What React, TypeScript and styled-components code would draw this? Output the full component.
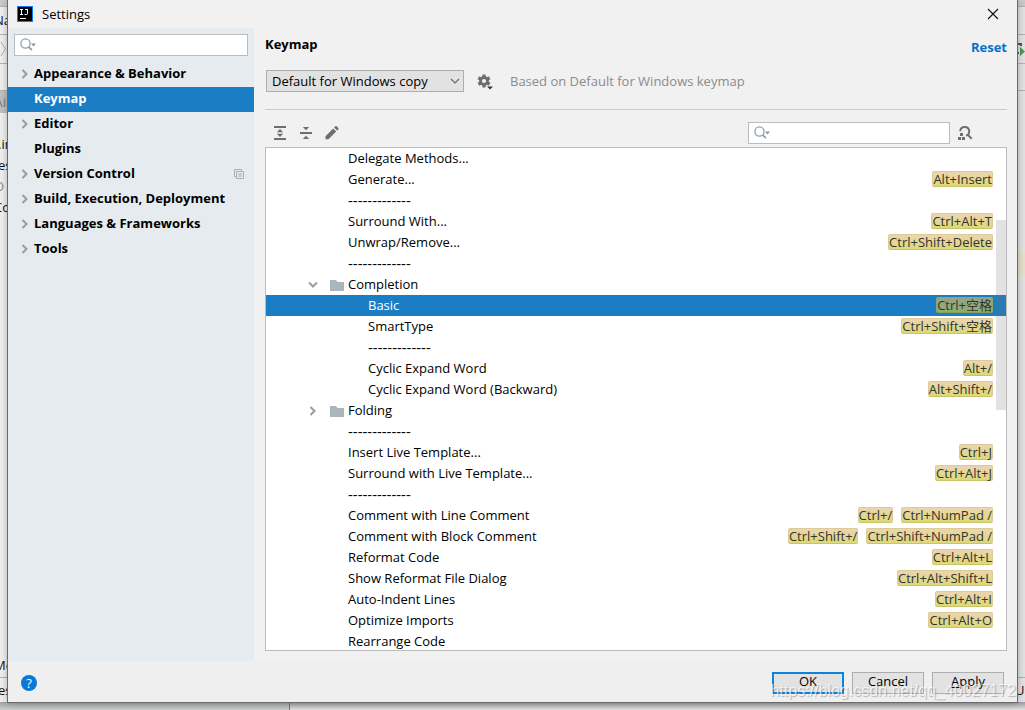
import React from "react";
import styled, { createGlobalStyle } from "styled-components";

const Global = createGlobalStyle`
  *, *::before, *::after { box-sizing: border-box; }
  body { margin: 0; background: #e4e4e4; color: #000; font: 13px/21px "Open Sans", "Noto Sans CJK SC", sans-serif; }
  button, input, select { font: inherit; color: inherit; }
`;

const Desktop = styled.div`
  position: relative;
  display: grid;
  grid-template-columns: 8px minmax(0, 1fr) 8px;
  grid-template-rows: minmax(0, 1fr) 8px;
  height: 100vh;
  min-height: 480px;
  overflow: hidden;
`;

const LeftEdge = styled.div`
  grid-row: 1;
  grid-column: 1;
  display: flex;
  flex-direction: column;
  overflow: hidden;
  background: #f0f0f0;
  white-space: nowrap;
`;
const RightEdge = styled(LeftEdge)`
  grid-column: 3;
  background: #e3e3e3;
`;
const EdgeCell = styled.div<{ $h: number; $bg?: string; $line?: boolean; $fg?: string; $cut?: boolean }>`
  flex: 0 0 ${(p) => p.$h}px;
  display: flex;
  align-items: center;
  text-indent: ${(p) => (p.$cut ? "-6px" : "-2px")};
  background: ${(p) => p.$bg || "transparent"};
  border-bottom: ${(p) => (p.$line ? "1px solid #b4b4b4" : "0")};
  color: ${(p) => p.$fg || "#111"};
`;
const EdgeFill = styled.div`
  flex: 1;
`;
const BottomEdge = styled.div`
  grid-column: 1 / -1;
  grid-row: 2;
  display: flex;
  background: linear-gradient(#9a9a9a, #e2e2e2);
`;
const BottomLeft = styled.div`
  flex: 0 0 290px;
  background: linear-gradient(#a0a2a1, #cdcfce);
  border-right: 1px solid #777;
`;

const Dialog = styled.section`
  grid-column: 2;
  grid-row: 1;
  z-index: 1;
  display: grid;
  grid-template-columns: 246px minmax(0, 1fr);
  grid-template-rows: 28px minmax(0, 1fr) 41px;
  background: #f1f1f1;
  box-shadow: 0 0 0 1px #6a6a6a, 0 0 8px rgba(0, 0, 0, 0.35);
`;
const TitleBar = styled.header`
  grid-column: 1 / -1;
  display: flex;
  align-items: center;
  gap: 9px;
  padding: 0 18px 0 9px;
`;
const Title = styled.span`
  flex: 1;
`;
const IconButton = styled.button`
  display: flex;
  align-items: center;
  justify-content: center;
  padding: 0;
  border: 0;
  background: none;
`;

const Sidebar = styled.aside`
  background: #e5ebef;
  padding-top: 6px;
`;
const SearchBox = styled.label<{ $w?: number }>`
  display: flex;
  align-items: center;
  width: ${(p) => (p.$w ? p.$w + "px" : "auto")};
  height: 22px;
  padding-left: 5px;
  background: #fff;
  border: 1px solid #bcbcbc;
`;
const SideSearch = styled.div`
  padding: 0 6px;
`;
const SearchInput = styled.input`
  flex: 1;
  min-width: 0;
  border: 0;
  outline: 0;
  padding: 0 4px;
  background: transparent;
`;
const NavList = styled.ul`
  list-style: none;
  margin: 6px 0 0;
  padding: 0;
`;
const NavItem = styled.li<{ $active?: boolean }>`
  display: flex;
  align-items: center;
  height: 25px;
  padding: 0 10px 2px 12px;
  font-weight: 700;
  background: ${(p) => (p.$active ? "#1b7dc4" : "transparent")};
  color: ${(p) => (p.$active ? "#fff" : "#000")};
`;
const NavArrow = styled.span`
  display: flex;
  width: 14px;
`;
const NavLink = styled.a`
  flex: 1;
  color: inherit;
  text-decoration: none;
`;

const Main = styled.main`
  display: flex;
  flex-direction: column;
  min-height: 0;
  padding: 5px 10px 10px 11px;
`;
const HeadingRow = styled.div`
  display: flex;
  justify-content: space-between;
  align-items: center;
  height: 22px;
`;
const Heading = styled.h1`
  margin: 0;
  font-size: 13px;
`;
const ResetLink = styled.a`
  padding-top: 6px;
  font-weight: 700;
  color: #0870c8;
  text-decoration: none;
`;
const SchemeRow = styled.div`
  display: flex;
  align-items: center;
  height: 55px;
  padding: 0 0 3px 1px;
  border-bottom: 1px solid #cbcbcb;
`;
const SelectWrap = styled.span`
  display: grid;
  align-items: center;
  width: 198px;
  svg { grid-area: 1 / 1; justify-self: end; margin-right: 4px; pointer-events: none; }
`;
const SchemeSelect = styled.select`
  grid-area: 1 / 1;
  appearance: none;
  height: 22px;
  padding: 0 5px 2px;
  border: 1px solid #adadad;
  border-radius: 0;
  background: #e2e2e2;
`;
const Hint = styled.span`
  margin-left: 16px;
  padding-top: 2px;
  color: #8c8c8c;
`;
const GearButton = styled(IconButton)`
  margin-left: 13px;
  padding-top: 2px;
`;
const ToolRow = styled.div`
  display: flex;
  align-items: center;
  gap: 10px;
  height: 37px;
  padding: 8px 34px 0 7px;
`;
const ToolSpacer = styled.span`
  flex: 1;
`;
const ShortcutFind = styled.div`
  display: flex;
  align-items: center;
  gap: 7px;
`;

const TreePanel = styled.div`
  flex: 1;
  min-height: 0;
  display: grid;
  background: #fff;
  border: 1px solid #bcbcbc;
  overflow: hidden;
`;
const Tree = styled.ul`
  grid-area: 1 / 1;
  list-style: none;
  margin: 0;
  padding: 0;
`;
const ScrollThumb = styled.div`
  grid-area: 1 / 1;
  z-index: 1;
  justify-self: end;
  width: 10px;
  height: 190px;
  margin-top: 72px;
  background: rgba(110, 110, 110, 0.2);
`;
const Row = styled.li<{ $selected?: boolean; $indent: number }>`
  display: flex;
  align-items: center;
  height: 21px;
  padding: 0 13px 0 ${(p) => p.$indent}px;
  background: ${(p) => (p.$selected ? "#1b7dc4" : "transparent")};
  color: ${(p) => (p.$selected ? "#fff" : "#000")};
`;
const RowArrow = styled.span`
  display: flex;
  width: 22px;
`;
const RowFolder = styled.span`
  display: flex;
  width: 18px;
`;
const RowName = styled.span<{ $rule?: boolean }>`
  flex: 1;
  font-size: ${(p) => (p.$rule ? 15 : 13)}px;
  white-space: nowrap;
`;
const Keys = styled.span`
  display: flex;
  gap: 8px;
  padding-bottom: 2px;
`;
const Key = styled.kbd<{ $selected?: boolean }>`
  height: 16px;
  border: 1px solid ${(p) => (p.$selected ? "#8fa56c" : "#dccb98")};
  border-bottom-color: ${(p) => (p.$selected ? "#86a258" : "#c9c46a")};
  border-radius: 2px;
  background: ${(p) => (p.$selected ? "linear-gradient(#93a48b, #8fae66)" : "linear-gradient(#ecd5b0, #ddd976)")};
  color: #333;
  font: 13px/14px "Open Sans", "Noto Sans CJK SC", sans-serif;
  white-space: nowrap;
`;

const Footer = styled.footer`
  grid-column: 1 / -1;
  display: flex;
  align-items: center;
  gap: 8px;
  padding: 2px 13px 0;
  background: #efefef;
`;
const HelpButton = styled.button`
  width: 16px;
  height: 16px;
  padding: 0;
  margin-right: auto;
  border: 0;
  border-radius: 50%;
  background: #0a78d7;
  color: #fff;
  font-size: 13px;
  line-height: 16px;
`;
const DialogButton = styled.button<{ $primary?: boolean }>`
  width: 72px;
  height: 22px;
  padding: 0 0 3px;
  line-height: 15px;
  border: ${(p) => (p.$primary ? "2px solid #0a84e0" : "1px solid #adadad")};
  background: #e2e2e2;
`;
const Watermark = styled.div`
  position: absolute;
  z-index: 2;
  right: 9px;
  bottom: 9px;
  font: 16px/20px "Liberation Sans", sans-serif;
  color: rgba(255, 255, 255, 0.7);
  text-shadow: 1px 1px 1px rgba(0, 0, 0, 0.25);
  pointer-events: none;
`;

const Chevron = ({ open = false }: { open?: boolean }) => (
  <svg width="10" height="10" viewBox="0 0 10 10" fill="none" stroke="#9a9c9e" strokeWidth="2" aria-hidden="true">
    <path d={open ? "M1 2.5L5 6.5L9 2.5" : "M2.5 1L6.5 5L2.5 9"} />
  </svg>
);
const SearchIcon = () => (
  <svg width="18" height="14" viewBox="0 0 18 14" fill="none" stroke="#8fa0a8" strokeWidth="1.3" aria-hidden="true">
    <circle cx="5.5" cy="5.5" r="4.6" />
    <path d="M8.6 8.8L12 12.2" strokeWidth="1.8" />
    <path d="M11 5.5H16L13.5 8.5Z" fill="#8793a0" stroke="none" />
  </svg>
);
const Logo = () => (
  <svg width="16" height="16" viewBox="0 0 16 16" aria-hidden="true">
    <rect width="16" height="16" fill="#087cfa" />
    <rect x="1" y="1" width="14" height="14" fill="#000" />
    <path d="M3 3.5H6M4.5 3.5V8.5M3 8.5H6M8 3.5H11M10.5 3V7.5Q10.5 8.5 9.5 8.5H7.5" stroke="#fff" fill="none" />
    <path d="M3 12.5H9" stroke="#fff" />
  </svg>
);
const CloseIcon = () => (
  <svg width="12" height="12" viewBox="0 0 12 12" stroke="#111" strokeWidth="1.1" aria-hidden="true">
    <path d="M1 1L11 11M11 1L1 11" />
  </svg>
);
const CopyIcon = () => (
  <svg width="10" height="10" viewBox="0 0 10 10" fill="none" stroke="#a5b0b7" aria-hidden="true">
    <path d="M2.5 7.5H0.5V0.5H7.5V2.5M2.5 2.5H9.5V9.5H2.5ZM4 5H8M4 7H8" />
  </svg>
);
const GearIcon = () => (
  <svg width="17" height="17" viewBox="0 0 17 17" aria-hidden="true">
    <g transform="translate(7 8)">
      <circle r="3.5" fill="none" stroke="#6e6e6e" strokeWidth="2.8" />
      {[0, 60, 120, 180, 240, 300].map((a) => (
        <rect key={a} x="-1.6" y="-6.5" width="3.2" height="3" fill="#6e6e6e" transform={`rotate(${a})`} />
      ))}
    </g>
    <path d="M10 13.5H16L13 16.5Z" fill="#333" />
  </svg>
);
const ExpandIcon = () => (
  <svg width="16" height="16" viewBox="0 0 16 16" fill="#6e6e6e" aria-hidden="true">
    <path d="M2 1H14V3H2ZM2 13H14V15H2ZM8 4L11.2 7.2H4.8ZM8 12L11.2 8.8H4.8Z" />
  </svg>
);
const CollapseIcon = () => (
  <svg width="16" height="16" viewBox="0 0 16 16" fill="#6e6e6e" aria-hidden="true">
    <path d="M2 7H14V9H2ZM4.8 2H11.2L8 5.2ZM4.8 14H11.2L8 10.8Z" />
  </svg>
);
const PencilIcon = () => (
  <svg width="16" height="16" viewBox="0 0 16 16" fill="#6e6e6e" aria-hidden="true">
    <path d="M1.5 11.2L9.2 3.5L12.2 6.5L4.5 14.2H1.5ZM10.1 2.6L11.4 1.3Q12 .8 12.6 1.3L14.4 3.1Q14.9 3.7 14.4 4.3L13.1 5.6Z" />
  </svg>
);
const FindShortcutIcon = () => (
  <svg width="16" height="16" viewBox="0 0 16 16" fill="none" stroke="#6e6e6e" strokeWidth="2" aria-hidden="true">
    <path d="M3.2 6.3A4.5 4.5 0 1 1 9 10.7M10.5 9.5L14.7 13.7" />
    <path d="M3 8H6V11H3ZM1 12H4V15H1ZM5 12H8V15H5Z" fill="#6e6e6e" stroke="none" />
  </svg>
);
const FolderIcon = () => (
  <svg width="14" height="12" viewBox="0 0 14 12" fill="#aab5bc" aria-hidden="true">
    <path d="M0 1H6L7.5 3H14V12H0Z" />
  </svg>
);
const SelectArrow = () => (
  <svg width="10" height="6" viewBox="0 0 10 6" fill="none" stroke="#666" strokeWidth="1.1" aria-hidden="true">
    <path d="M1 1L5 5L9 1" />
  </svg>
);
const RunIcon = () => (
  <svg width="8" height="14" viewBox="0 0 8 14" aria-hidden="true">
    <path d="M0 2H4V4M0 11H2" fill="none" stroke="#555" strokeWidth="2" />
    <path d="M3 5L8 9.5L3 14Z" fill="#4a9a58" />
  </svg>
);
const CrumbIcon = () => (
  <svg width="8" height="16" viewBox="0 0 8 16" fill="none" stroke="#b0b0b0" aria-hidden="true">
    <path d="M1 1L5.5 8L1 15" />
  </svg>
);

type NavEntry = { name: string; arrow?: boolean; active?: boolean; copy?: boolean };
const nav: NavEntry[] = [
  { name: "Appearance & Behavior", arrow: true },
  { name: "Keymap", active: true },
  { name: "Editor", arrow: true },
  { name: "Plugins" },
  { name: "Version Control", arrow: true, copy: true },
  { name: "Build, Execution, Deployment", arrow: true },
  { name: "Languages & Frameworks", arrow: true },
  { name: "Tools", arrow: true },
];

type TreeEntry = { name: string; keys?: string[]; folder?: "open" | "closed"; deep?: boolean; selected?: boolean };
const dashes = "-------------";
const rows: TreeEntry[] = [
  { name: "Delegate Methods..." },
  { name: "Generate...", keys: ["Alt+Insert"] },
  { name: dashes },
  { name: "Surround With...", keys: ["Ctrl+Alt+T"] },
  { name: "Unwrap/Remove...", keys: ["Ctrl+Shift+Delete"] },
  { name: dashes },
  { name: "Completion", folder: "open" },
  { name: "Basic", keys: ["Ctrl+空格"], deep: true, selected: true },
  { name: "SmartType", keys: ["Ctrl+Shift+空格"], deep: true },
  { name: dashes, deep: true },
  { name: "Cyclic Expand Word", keys: ["Alt+/"], deep: true },
  { name: "Cyclic Expand Word (Backward)", keys: ["Alt+Shift+/"], deep: true },
  { name: "Folding", folder: "closed" },
  { name: dashes },
  { name: "Insert Live Template...", keys: ["Ctrl+J"] },
  { name: "Surround with Live Template...", keys: ["Ctrl+Alt+J"] },
  { name: dashes },
  { name: "Comment with Line Comment", keys: ["Ctrl+/", "Ctrl+NumPad /"] },
  { name: "Comment with Block Comment", keys: ["Ctrl+Shift+/", "Ctrl+Shift+NumPad /"] },
  { name: "Reformat Code", keys: ["Ctrl+Alt+L"] },
  { name: "Show Reformat File Dialog", keys: ["Ctrl+Alt+Shift+L"] },
  { name: "Auto-Indent Lines", keys: ["Ctrl+Alt+I"] },
  { name: "Optimize Imports", keys: ["Ctrl+Alt+O"] },
  { name: "Rearrange Code" },
];

const indentOf = (r: TreeEntry) => (r.folder ? 42 : r.deep ? 102 : 82);

export default function App() {
  return (
    <>
      <Global />
      <Desktop>
        <LeftEdge>
          <EdgeCell $h={7} $bg="#c9cbca" $line />
          <EdgeCell $h={28} $line $cut>Na</EdgeCell>
          <EdgeCell $h={29} $line><CrumbIcon /></EdgeCell>
          <EdgeCell $h={27} $line />
          <EdgeCell $h={22} $bg="#c0c0c0" $fg="#777">\i</EdgeCell>
          <EdgeCell $h={21} />
          <EdgeCell $h={21}>.in</EdgeCell>
          <EdgeCell $h={21}>es</EdgeCell>
          <EdgeCell $h={21} $cut $fg="#888">O</EdgeCell>
          <EdgeCell $h={21} $cut>Co</EdgeCell>
          <EdgeFill />
          <EdgeCell $h={24} $line $cut>Me</EdgeCell>
          <EdgeCell $h={24}>es</EdgeCell>
        </LeftEdge>
        <Dialog aria-label="Settings">
          <TitleBar>
            <Logo />
            <Title>Settings</Title>
            <IconButton aria-label="Close"><CloseIcon /></IconButton>
          </TitleBar>
          <Sidebar>
            <SideSearch>
              <SearchBox>
                <SearchIcon />
                <SearchInput type="text" aria-label="Search settings" />
              </SearchBox>
            </SideSearch>
            <NavList>
              {nav.map((n) => (
                <NavItem key={n.name} $active={n.active}>
                  <NavArrow>{n.arrow && <Chevron />}</NavArrow>
                  <NavLink href="#">{n.name}</NavLink>
                  {n.copy && <CopyIcon />}
                </NavItem>
              ))}
            </NavList>
          </Sidebar>
          <Main>
            <HeadingRow>
              <Heading>Keymap</Heading>
              <ResetLink href="#">Reset</ResetLink>
            </HeadingRow>
            <SchemeRow>
              <SelectWrap>
                <SchemeSelect aria-label="Keymap scheme">
                  <option>Default for Windows copy</option>
                </SchemeSelect>
                <SelectArrow />
              </SelectWrap>
              <GearButton aria-label="Scheme actions"><GearIcon /></GearButton>
              <Hint>Based on Default for Windows keymap</Hint>
            </SchemeRow>
            <ToolRow>
              <IconButton aria-label="Expand all"><ExpandIcon /></IconButton>
              <IconButton aria-label="Collapse all"><CollapseIcon /></IconButton>
              <IconButton aria-label="Edit shortcut"><PencilIcon /></IconButton>
              <ToolSpacer />
              <ShortcutFind>
                <SearchBox $w={202}>
                  <SearchIcon />
                  <SearchInput type="text" aria-label="Search actions" />
                </SearchBox>
                <IconButton aria-label="Find by shortcut"><FindShortcutIcon /></IconButton>
              </ShortcutFind>
            </ToolRow>
            <TreePanel>
              <Tree>
                {rows.map((r, i) => (
                  <Row key={i} $indent={indentOf(r)} $selected={r.selected}>
                    {r.folder && <RowArrow><Chevron open={r.folder === "open"} /></RowArrow>}
                    {r.folder && <RowFolder><FolderIcon /></RowFolder>}
                    <RowName $rule={r.name === dashes}>{r.name}</RowName>
                    <Keys>
                      {r.keys?.map((k) => <Key key={k} $selected={r.selected}>{k}</Key>)}
                    </Keys>
                  </Row>
                ))}
              </Tree>
              <ScrollThumb />
            </TreePanel>
          </Main>
          <Footer>
            <HelpButton aria-label="Help">?</HelpButton>
            <DialogButton $primary>OK</DialogButton>
            <DialogButton>Cancel</DialogButton>
            <DialogButton><u>A</u>pply</DialogButton>
          </Footer>
        </Dialog>
        <RightEdge>
          <EdgeCell $h={7} $bg="#c9cbca" $line />
          <EdgeCell $h={28} $line />
          <EdgeCell $h={29} $line><RunIcon /></EdgeCell>
          <EdgeCell $h={27} $line />
          <EdgeCell $h={161} />
          <EdgeCell $h={23} $bg="#e6e0cc" />
          <EdgeFill />
          <EdgeCell $h={22} $line />
          <EdgeCell $h={24}>U</EdgeCell>
        </RightEdge>
        <BottomEdge><BottomLeft /></BottomEdge>
        <Watermark>https://blog.csdn.net/qq_40027172</Watermark>
      </Desktop>
    </>
  );
}
